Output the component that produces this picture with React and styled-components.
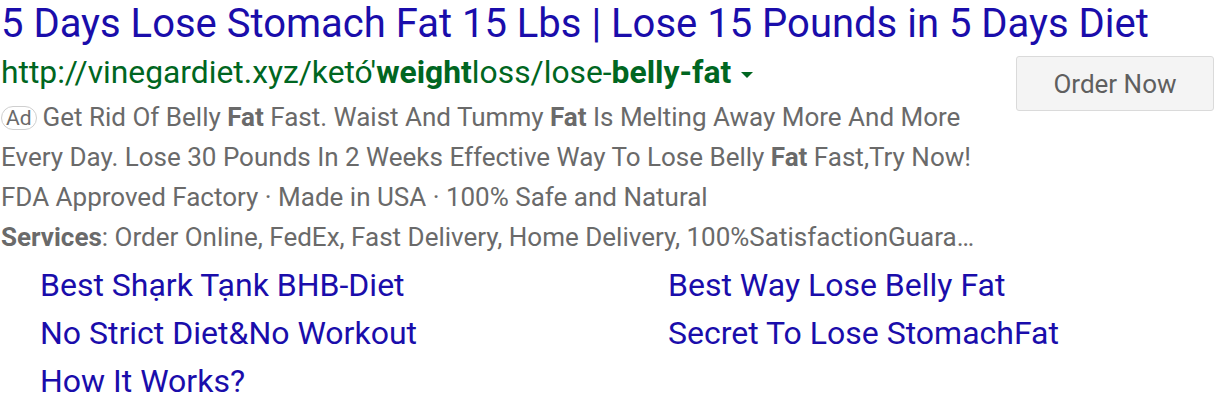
import styled, { createGlobalStyle } from "styled-components";

const Global = createGlobalStyle`
  body {
    margin: 0;
    background: #fff;
    font-family: Roboto, "Liberation Sans", Arial, sans-serif;
  }
`;

const Page = styled.div`
  width: 1216px;
  height: 410px;
  overflow: hidden;
  padding: 0 0 0 1px;
  box-sizing: border-box;
`;

const Title = styled.div`
  color: #1a0dab;
  font-size: 40px;
  line-height: 48px;
  white-space: nowrap;
`;

const Body = styled.div`
  display: flex;
  align-items: flex-start;
  justify-content: space-between;
`;

const Main = styled.div`
  display: flex;
  flex-direction: column;
`;

const Url = styled.div`
  color: #006621;
  font-size: 31.8px;
  line-height: 49px;
  white-space: nowrap;
  display: flex;
  align-items: center;
  b {
    font-weight: 700;
  }
`;

const Caret = styled.span`
  display: inline-block;
  width: 0;
  height: 0;
  margin-left: 10px;
  margin-top: 4px;
  border-left: 6px solid transparent;
  border-right: 6px solid transparent;
  border-top: 6px solid #006621;
`;

const Line = styled.div`
  color: #6a6a6a;
  font-size: 26px;
  line-height: 40px;
  white-space: nowrap;
  b {
    font-weight: 700;
  }
`;

const AdBadge = styled.span`
  display: inline-block;
  border: 1px solid #cfcfcf;
  border-radius: 12px;
  font-size: 21px;
  line-height: 22px;
  padding: 0 4px;
  margin-right: 6px;
  color: #6a6a6a;
  vertical-align: 1px;
`;

const OrderButton = styled.button`
  margin-top: 8px;
  margin-right: 2px;
  width: 198px;
  height: 55px;
  background: #f4f4f4;
  border: 1px solid #dadada;
  border-radius: 3px;
  color: #5f5f5f;
  font-family: Roboto, "Liberation Sans", Arial, sans-serif;
  font-size: 26px;
`;

const Sitelinks = styled.div`
  display: grid;
  grid-template-columns: 628px 1fr;
  padding-left: 39px;
  margin-top: 4px;
`;

const Sitelink = styled.a`
  color: #1a0dab;
  font-size: 32px;
  line-height: 48px;
  text-decoration: none;
  white-space: nowrap;
`;

const links = [
  "Best Sh\u1ea1rk T\u1ea1nk BHB-Diet",
  "Best Way Lose Belly Fat",
  "No Strict Diet&No Workout",
  "Secret To Lose StomachFat",
  "How It Works?",
];

export default function App() {
  return (
    <Page>
      <Global />
      <Title>5 Days Lose Stomach Fat 15 Lbs | Lose 15 Pounds in 5 Days Diet</Title>
      <Body>
        <Main>
          <Url>
            <span>
              http://vinegardiet.xyz/ketó'<b>weight</b>loss/lose-<b>belly-fat</b>
            </span>
            <Caret />
          </Url>
          <Line>
            <AdBadge>Ad</AdBadge>Get Rid Of Belly <b>Fat</b> Fast. Waist And Tummy <b>Fat</b> Is Melting Away More And More
          </Line>
          <Line>
            Every Day. Lose 30 Pounds In 2 Weeks Effective Way To Lose Belly <b>Fat</b> Fast,Try Now!
          </Line>
          <Line>FDA Approved Factory · Made in USA · 100% Safe and Natural</Line>
          <Line>
            <b>Services</b>: Order Online, FedEx, Fast Delivery, Home Delivery, 100%SatisfactionGuara…
          </Line>
        </Main>
        <OrderButton>Order Now</OrderButton>
      </Body>
      <Sitelinks>
        {links.map((l) => (
          <Sitelink key={l} href="#">
            {l}
          </Sitelink>
        ))}
      </Sitelinks>
    </Page>
  );
}
